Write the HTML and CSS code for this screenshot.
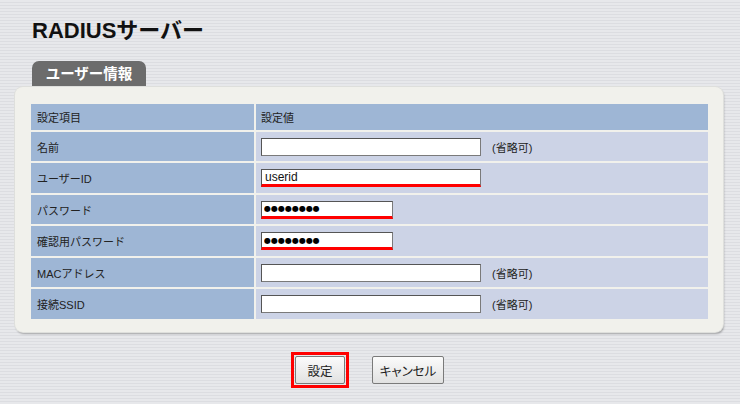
FILE: index.html
```html
<!DOCTYPE html>
<html lang="ja">
<head>
<meta charset="utf-8">
<title>RADIUSサーバー</title>
<link rel="stylesheet" href="styles.css">
</head>
<body>
<div class="page">
  <h1 class="title">RADIUSサーバー</h1>
  <div class="tab">ユーザー情報</div>
  <div class="panel">
    <table class="settings">
      <colgroup><col class="c-label"><col class="c-value"></colgroup>
      <tr class="head"><th>設定項目</th><th>設定値</th></tr>
      <tr class="r29"><td class="label">名前</td><td class="value"><input class="field" type="text" value=""><span class="note">(省略可)</span></td></tr>
      <tr class="r30"><td class="label">ユーザーID</td><td class="value"><input class="field mark" type="text" value="userid"></td></tr>
      <tr class="r29"><td class="label">パスワード</td><td class="value"><input class="field short mark dots" type="text" value="●●●●●●●●"></td></tr>
      <tr class="r30"><td class="label">確認用パスワード</td><td class="value"><input class="field short mark dots" type="text" value="●●●●●●●●"></td></tr>
      <tr class="r29"><td class="label">MACアドレス</td><td class="value"><input class="field" type="text" value=""><span class="note">(省略可)</span></td></tr>
      <tr class="r30"><td class="label">接続SSID</td><td class="value"><input class="field" type="text" value=""><span class="note">(省略可)</span></td></tr>
    </table>
  </div>
  <div class="actions">
    <span class="highlight"><button class="btn btn-ok" type="button">設定</button></span>
    <button class="btn btn-cancel" type="button">キャンセル</button>
  </div>
</div>
</body>
</html>
```

FILE: styles.css
```css
html, body {
  margin: 0;
  padding: 0;
}
body {
  width: 740px;
  height: 404px;
  overflow: hidden;
  font-family: "Liberation Sans", "Noto Sans CJK JP", sans-serif;
  font-size: 11px;
  color: #222;
  background: repeating-linear-gradient(to bottom, #e7e8eb 0, #e7e8eb 2px, #dcdde1 2px, #dcdde1 3px);
}
.page {
  padding: 16px 17px 0 15px;
}
.title {
  margin: 0 0 0 17px;
  font-size: 22px;
  font-weight: bold;
  line-height: 30px;
  height: 30px;
  color: #111;
}
.tab {
  margin: 15px 0 0 17px;
  width: 114px;
  height: 26px;
  line-height: 27px;
  background: #6c6c6c;
  border-radius: 7px 7px 0 0;
  color: #fff;
  font-size: 14.5px;
  font-weight: bold;
  text-align: center;
}
.panel {
  background: #f1f1ec;
  border-radius: 8px;
  padding: 15px 13px 11px 14px;
  box-shadow: 0 0 0 1px #dedfdc, 1px 2px 2px rgba(0, 0, 0, 0.3);
}
.settings {
  border-spacing: 2px;
  table-layout: fixed;
  width: 681px;
}
.c-label { width: 223px; }
.c-value { width: 452px; }
.settings th, .settings td {
  padding: 0;
  vertical-align: middle;
  text-align: left;
  font-weight: normal;
}
.head { height: 26px; }
.head th { background: #9eb6d5; }
.head th:first-child { padding-left: 6px; }
.head th:last-child { padding-left: 5px; }
.r29 { height: 29px; }
.r30 { height: 30px; }
.label {
  background: #9eb6d5;
  padding-left: 6px !important;
}
.value {
  background: #ccd3e6;
  padding-left: 5px !important;
}
.field {
  box-sizing: border-box;
  width: 220px;
  height: 18px;
  margin: 0;
  padding: 0 3px;
  border: 1px solid #7a7a7a;
  border-top-color: #555;
  border-left-color: #555;
  background: #fff;
  font-family: "Liberation Sans", sans-serif;
  font-size: 12px;
  color: #111;
  vertical-align: middle;
}
.field.short { width: 132px; }
.field.mark { border-bottom: 3px solid #f00; }
.field.dots {
  font-family: "DejaVu Sans", sans-serif;
  font-size: 8px;
  letter-spacing: 0;
  padding-left: 2px;
  color: #000;
}
.note {
  margin-left: 11px;
  vertical-align: middle;
}
.actions {
  margin-top: 20px;
  display: flex;
  justify-content: center;
  align-items: center;
  gap: 23px;
  padding-right: 3px;
}
.highlight {
  display: flex;
  border: 3px solid #f00;
  padding: 1px;
}
.btn {
  height: 28px;
  margin: 0;
  padding: 0;
  border: 1px solid #7a7a7a;
  border-radius: 2px;
  background: linear-gradient(to bottom, #fbfbfb, #e1e1e1);
  font-family: "Noto Sans CJK JP", sans-serif;
  font-size: 12.5px;
  font-feature-settings: "palt";
  color: #222;
}
.btn-ok { width: 50px; }
.btn-cancel { width: 72px; }
```
